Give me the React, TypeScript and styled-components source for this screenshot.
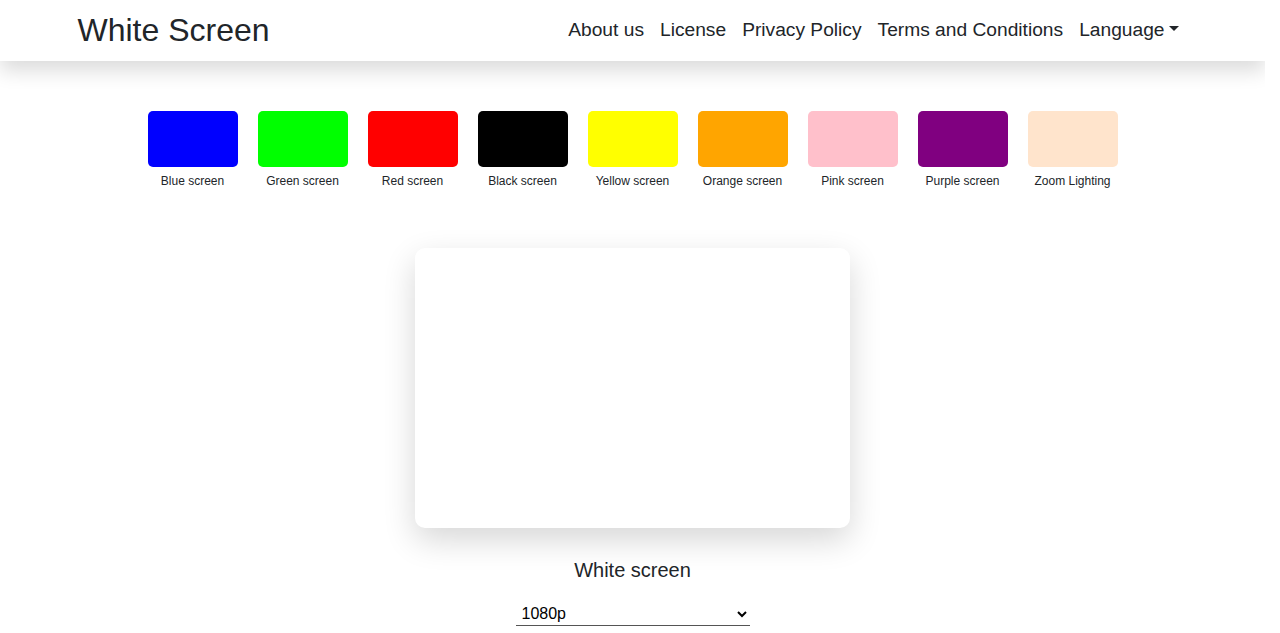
import { useState } from "react";
import styled, { createGlobalStyle } from "styled-components";

const GlobalStyle = createGlobalStyle`
  body {
    margin: 0 15px 0 0;
    font-family: "Liberation Sans", Arial, sans-serif;
    color: #212529;
    background: #fff;
  }
`;

const Navbar = styled.nav`
  height: 61px;
  background: #fff;
  box-shadow: 0 10px 20px rgba(0, 0, 0, 0.14);
  position: relative;
  z-index: 2;
`;

const NavInner = styled.div`
  max-width: 1140px;
  margin: 0 auto;
  padding: 0 12px;
  height: 100%;
  box-sizing: border-box;
  display: flex;
  align-items: center;
  justify-content: space-between;
`;

const Brand = styled.a`
  font-size: 32px;
  color: #212529;
  text-decoration: none;
  margin-left: 3px;
  margin-bottom: 1px;
`;

const NavList = styled.ul`
  display: flex;
  list-style: none;
  margin: 0 4px 2px 0;
  padding: 0;
`;

const NavLink = styled.a`
  display: flex;
  align-items: center;
  font-size: 19.2px;
  padding: 8px;
  color: #212529;
  text-decoration: none;
  cursor: pointer;
`;

const Caret = styled.span`
  display: inline-block;
  margin-left: 4px;
  margin-bottom: 2px;
  border-top: 5px solid #212529;
  border-left: 5px solid transparent;
  border-right: 5px solid transparent;
`;

const Swatches = styled.div`
  display: flex;
  justify-content: center;
  padding-top: 50px;
`;

const SwatchItem = styled.button`
  width: 110px;
  display: flex;
  flex-direction: column;
  align-items: center;
  background: none;
  border: none;
  padding: 0;
  cursor: pointer;
  font-family: inherit;
`;

const Swatch = styled.span<{ $color: string }>`
  width: 90px;
  height: 56px;
  border-radius: 5px;
  background: ${(p) => p.$color};
`;

const SwatchLabel = styled.span`
  font-size: 12px;
  color: #212529;
  margin-top: 7px;
`;

const Stage = styled.main`
  display: flex;
  flex-direction: column;
  align-items: center;
  padding-top: 60px;
  min-height: 7000px;
`;

const Preview = styled.div`
  width: 435px;
  height: 280px;
  background: #fff;
  border-radius: 10px;
  box-shadow: 0 12px 32px rgba(0, 0, 0, 0.16);
`;

const Title = styled.h1`
  font-size: 20px;
  font-weight: 400;
  margin: 30px 0 0;
  line-height: 24px;
`;

const Select = styled.select`
  margin-top: 20px;
  width: 234px;
  height: 24px;
  font-family: "Liberation Sans", Arial, sans-serif;
  font-size: 16px;
  color: #000;
  background: #fff;
  border: none;
  border-bottom: 1px solid #555;
  border-radius: 0;
  padding: 0 2px;
  outline: none;
`;

const colors = [
  { name: "Blue screen", color: "#0000ff" },
  { name: "Green screen", color: "#00ff00" },
  { name: "Red screen", color: "#ff0000" },
  { name: "Black screen", color: "#000000" },
  { name: "Yellow screen", color: "#ffff00" },
  { name: "Orange screen", color: "#ffa500" },
  { name: "Pink screen", color: "#ffc0cb" },
  { name: "Purple screen", color: "#800080" },
  { name: "Zoom Lighting", color: "#ffe4cc" },
];

const links = ["About us", "License", "Privacy Policy", "Terms and Conditions"];

export default function App() {
  const [res, setRes] = useState("1080p");

  return (
    <>
      <GlobalStyle />
      <Navbar>
        <NavInner>
          <Brand href="#">White Screen</Brand>
          <NavList>
            {links.map((l) => (
              <li key={l}>
                <NavLink>{l}</NavLink>
              </li>
            ))}
            <li>
              <NavLink>
                Language
                <Caret />
              </NavLink>
            </li>
          </NavList>
        </NavInner>
      </Navbar>
      <Swatches>
        {colors.map((c) => (
          <SwatchItem key={c.name}>
            <Swatch $color={c.color} />
            <SwatchLabel>{c.name}</SwatchLabel>
          </SwatchItem>
        ))}
      </Swatches>
      <Stage>
        <Preview />
        <Title>White screen</Title>
        <Select value={res} onChange={(e) => setRes(e.target.value)}>
          <option>4K</option>
          <option>1440p</option>
          <option>1080p</option>
          <option>720p</option>
          <option>480p</option>
        </Select>
      </Stage>
    </>
  );
}
